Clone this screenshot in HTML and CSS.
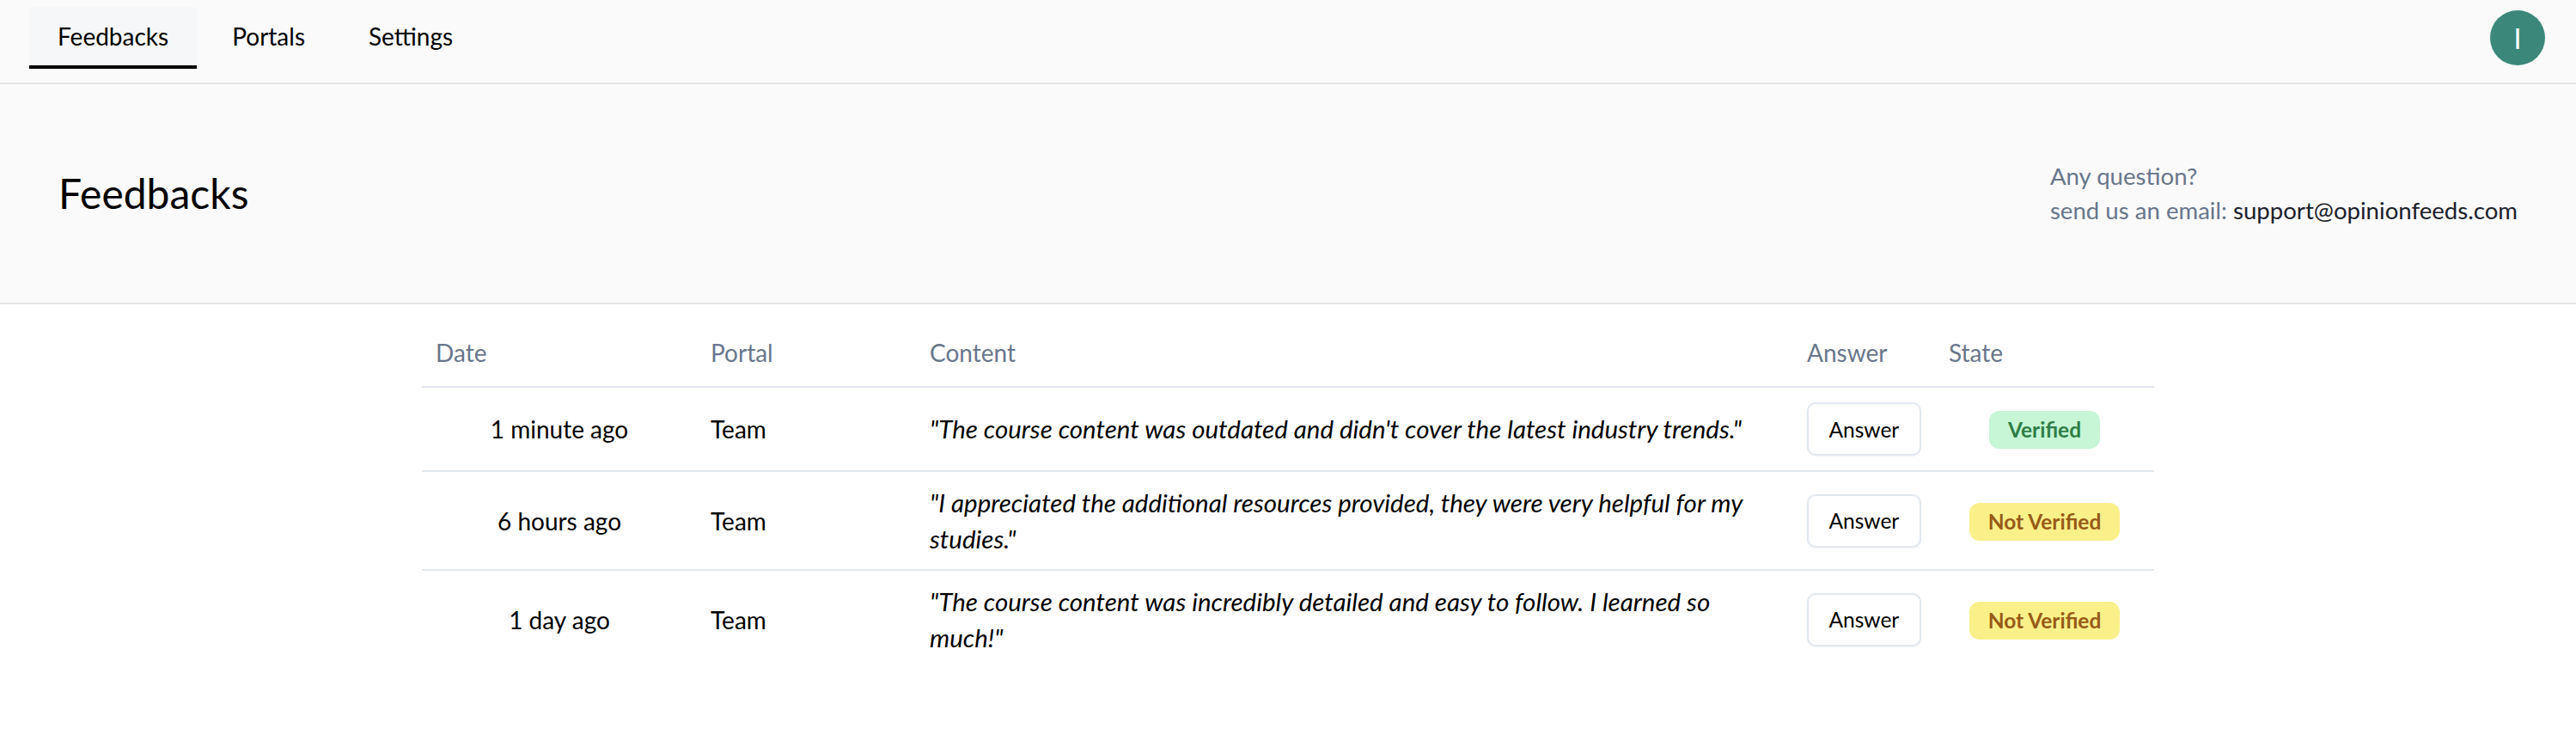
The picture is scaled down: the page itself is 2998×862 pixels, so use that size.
FILE: index.html
```html
<!DOCTYPE html>
<html lang="en">
<head>
<meta charset="utf-8">
<title>Feedbacks</title>
<link rel="stylesheet" href="styles.css">
</head>
<body>
<nav class="topnav">
  <div class="tabs">
    <a class="tab active">Feedbacks</a>
    <a class="tab">Portals</a>
    <a class="tab">Settings</a>
  </div>
  <div class="avatar">I</div>
</nav>
<header class="hero">
  <h1 class="title">Feedbacks</h1>
  <div class="contact">
    <div>Any question?</div>
    <div>send us an email: <span class="email">support@opinionfeeds.com</span></div>
  </div>
</header>
<main class="content">
  <table class="feed">
    <colgroup>
      <col class="c-date"><col class="c-portal"><col class="c-content"><col class="c-answer"><col class="c-state">
    </colgroup>
    <thead>
      <tr><th>Date</th><th>Portal</th><th>Content</th><th>Answer</th><th>State</th></tr>
    </thead>
    <tbody>
      <tr>
        <td class="date">1 minute ago</td>
        <td>Team</td>
        <td class="quote">"The course content was outdated and didn't cover the latest industry trends."</td>
        <td class="ans"><button class="btn">Answer</button></td>
        <td class="state"><span class="badge ok">Verified</span></td>
      </tr>
      <tr>
        <td class="date">6 hours ago</td>
        <td>Team</td>
        <td class="quote">"I appreciated the additional resources provided, they were very helpful for my studies."</td>
        <td class="ans"><button class="btn">Answer</button></td>
        <td class="state"><span class="badge warn">Not Verified</span></td>
      </tr>
      <tr>
        <td class="date">1 day ago</td>
        <td>Team</td>
        <td class="quote">"The course content was incredibly detailed and easy to follow. I learned so much!"</td>
        <td class="ans"><button class="btn">Answer</button></td>
        <td class="state"><span class="badge warn">Not Verified</span></td>
      </tr>
    </tbody>
  </table>
</main>
</body>
</html>
```
FILE: styles.css
```css
* { box-sizing: border-box; }
html, body { margin: 0; padding: 0; }
body {
  font-family: Lato, "Noto Sans", sans-serif;
  background: #ffffff;
  color: #000;
}
.topnav {
  display: flex;
  align-items: center;
  justify-content: space-between;
  height: 98px;
  padding: 8px 36px 16px 34px;
  background: #fafafa;
  border-bottom: 2px solid #e4e4e4;
}
.tabs { display: flex; gap: 8px; height: 72px; }
.tab {
  display: flex;
  align-items: center;
  padding: 0 33px;
  font-size: 28px;
  color: #000;
  border-bottom: 4px solid transparent;
  cursor: pointer;
}
.tab.active {
  background: #f6f7f9;
  border-bottom-color: #000;
}
.avatar {
  width: 64px;
  height: 64px;
  border-radius: 50%;
  background: #3b887b;
  color: #fff;
  display: flex;
  align-items: center;
  justify-content: center;
  font-size: 32px;
}
.hero {
  display: flex;
  align-items: center;
  justify-content: space-between;
  padding: 87px 68px;
  background: #fafafa;
  border-bottom: 2px solid #e4e4e4;
  height: 256px;
}
.title {
  margin: 0;
  font-size: 48px;
  font-weight: 400;
  line-height: 1.2;
}
.contact {
  font-size: 27.6px;
  line-height: 40px;
  color: #68768c;
}
.email { color: #1a202c; }
.content { padding-top: 17px; }
.feed {
  width: 2016px;
  margin: 0 auto;
  border-collapse: collapse;
  table-layout: fixed;
  font-size: 28px;
}
.c-date { width: 320px; }
.c-portal { width: 255px; }
.c-content { width: 1021px; }
.c-answer { width: 165px; }
.c-state { width: 255px; }
.feed th {
  text-align: left;
  font-weight: 400;
  color: #68768c;
  padding: 18px 16px;
  line-height: 42px;
  border-bottom: 2px solid #e2e8f0;
}
.feed td {
  padding: 14.5px 16px;
  line-height: 42px;
  vertical-align: middle;
  border-bottom: 2px solid #e2e8f0;
}
.feed td.ans { padding-top: 17px; padding-bottom: 17px; }
.feed tbody tr:last-child td { border-bottom: none; }
.feed td.date { text-align: center; }
.feed td.state { text-align: center; }
.quote { font-style: italic; font-size: 29.5px; }
.btn {
  font-family: Lato, "Noto Sans", sans-serif;
  font-size: 24.5px;
  height: 62px;
  padding: 0 23.5px;
  background: #fff;
  color: #000;
  border: 2px solid #e2e8f0;
  border-radius: 10px;
  box-shadow: 0 1px 2px rgba(0,0,0,0.06);
  display: block;
}
.badge {
  display: inline-block;
  height: 44px;
  line-height: 44px;
  padding: 0 22px;
  border-radius: 12px;
  font-weight: 700;
  font-size: 24.5px;
  vertical-align: middle;
}
.badge.ok { background: #c6f6d5; color: #2f7d47; }
.badge.warn { background: #faf089; color: #975a16; }
```
